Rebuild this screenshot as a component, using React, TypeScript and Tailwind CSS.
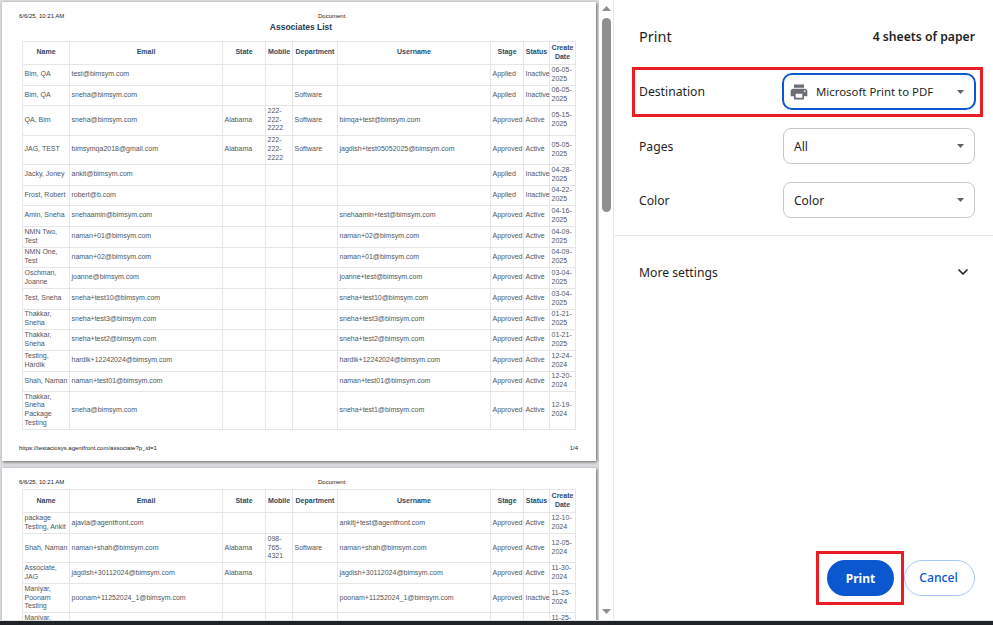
import { ChevronDown } from "lucide-react";
import { MdPrint } from "react-icons/md";

type Row = { h: number; c: string[] };

const widths = [47, 153, 43, 27, 45, 153, 33, 26, 26];
const heads = ["Name", "Email", "State", "Mobile", "Department", "Username", "Stage", "Status", "Create Date"];
const ap = ["Approved", "Active"];
const ai = ["Applied", "Inactive"];

const page1: Row[] = [
  { h: 21, c: ["Bim, QA", "test@bimsym.com", "", "", "", "", ...ai, "06-05-2025"] },
  { h: 20, c: ["Bim, QA", "sneha@bimsym.com", "", "", "Software", "", ...ai, "06-05-2025"] },
  { h: 30, c: ["QA, Bim", "sneha@bimsym.com", "Alabama", "222-222-2222", "Software", "bimqa+test@bimsym.com", ...ap, "05-15-2025"] },
  { h: 29, c: ["JAG, TEST", "bimsymqa2018@gmail.com", "Alabama", "222-222-2222", "Software", "jagdish+test05052025@bimsym.com", ...ap, "05-05-2025"] },
  { h: 21, c: ["Jacky, Joney", "ankit@bimsym.com", "", "", "", "", ...ai, "04-28-2025"] },
  { h: 20, c: ["Frost, Robert", "robert@b.com", "", "", "", "", ...ai, "04-22-2025"] },
  { h: 21, c: ["Amin, Sneha", "snehaamin@bimsym.com", "", "", "", "snehaamin+test@bimsym.com", ...ap, "04-16-2025"] },
  { h: 21, c: ["NMN Two, Test", "naman+01@bimsym.com", "", "", "", "naman+02@bimsym.com", ...ap, "04-09-2025"] },
  { h: 20, c: ["NMN One, Test", "naman+02@bimsym.com", "", "", "", "naman+01@bimsym.com", ...ap, "04-09-2025"] },
  { h: 21, c: ["Oschman, Joanne", "joanne@bimsym.com", "", "", "", "joanne+test@bimsym.com", ...ap, "03-04-2025"] },
  { h: 21, c: ["Test, Sneha", "sneha+test10@bimsym.com", "", "", "", "sneha+test10@bimsym.com", ...ap, "03-04-2025"] },
  { h: 20, c: ["Thakkar, Sneha", "sneha+test3@bimsym.com", "", "", "", "sneha+test3@bimsym.com", ...ap, "01-21-2025"] },
  { h: 21, c: ["Thakkar, Sneha", "sneha+test2@bimsym.com", "", "", "", "sneha+test2@bimsym.com", ...ap, "01-21-2025"] },
  { h: 21, c: ["Testing, Hardik", "hardik+12242024@bimsym.com", "", "", "", "hardik+12242024@bimsym.com", ...ap, "12-24-2024"] },
  { h: 20, c: ["Shah, Naman", "naman+test01@bimsym.com", "", "", "", "naman+test01@bimsym.com", ...ap, "12-20-2024"] },
  { h: 38, c: ["Thakkar, Sneha Package Testing", "sneha@bimsym.com", "", "", "", "sneha+test1@bimsym.com", ...ap, "12-19-2024"] },
];

const page2: Row[] = [
  { h: 21, c: ["package Testing, Ankit", "ajavia@agentfront.com", "", "", "", "ankitj+test@agentfront.com", ...ap, "12-10-2024"] },
  { h: 29, c: ["Shah, Naman", "naman+shah@bimsym.com", "Alabama", "098-765-4321", "Software", "naman+shah@bimsym.com", ...ap, "12-05-2024"] },
  { h: 21, c: ["Associate, JAG", "jagdish+30112024@bimsym.com", "Alabama", "", "", "jagdish+30112024@bimsym.com", ...ap, "11-30-2024"] },
  { h: 29, c: ["Maniyar, Poonam Testing", "poonam+11252024_1@bimsym.com", "", "", "", "poonam+11252024_1@bimsym.com", "Approved", "Inactive", "11-25-2024"] },
  { h: 21, c: ["Maniyar, Poonam", "", "", "", "", "", "", "", "11-25-2024"] },
];

function Table({ rows }: { rows: Row[] }) {
  return (
    <table className="table-fixed border-collapse w-[553px] ml-[20px] text-[7px] leading-[8.7px] text-[#50555b]">
      <colgroup>
        {widths.map((w, i) => (
          <col key={i} style={{ width: w }} />
        ))}
      </colgroup>
      <thead>
        <tr className="h-[23px]">
          {heads.map((t) => (
            <th key={t} className="border border-[#e6e6e6] px-0 py-0 text-center font-bold text-[#2d4a66] whitespace-normal">
              {t}
            </th>
          ))}
        </tr>
      </thead>
      <tbody>
        {rows.map((r, i) => (
          <tr key={i} style={{ height: r.h }}>
            {r.c.map((t, j) => (
              <td key={j} className="border border-[#e6e6e6] pl-[1.5px] pr-0 py-0 align-middle break-normal">
                {t}
              </td>
            ))}
          </tr>
        ))}
      </tbody>
    </table>
  );
}

function Sheet({ children, className }: { children: React.ReactNode; className: string }) {
  return <div className={"bg-white shrink-0 w-[594px] shadow-[1px_1px_3px_rgba(0,0,0,0.55)] " + className}>{children}</div>;
}

function Header() {
  return (
    <div className="flex text-[6px] leading-[8px] text-[#222] pl-[17px] pt-[10px]">
      <span className="w-[299px]">6/6/25, 10:21 AM</span>
      <span>Document</span>
    </div>
  );
}

function Caret() {
  return (
    <svg width="7" height="4" viewBox="0 0 7 4" className="shrink-0">
      <path d="M0 0h7L3.5 4z" fill="#5f6368" />
    </svg>
  );
}

function Select({ label }: { label: string }) {
  return (
    <div className="flex items-center justify-between w-[192px] h-[36px] rounded-[8px] border border-[#c7c7c7] pl-[10px] pr-[10px] text-[12px] text-[#1f1f1f]">
      <span className="pt-[1px]">{label}</span>
      <Caret />
    </div>
  );
}

function Field({ label, children, className }: { label: string; children: React.ReactNode; className: string }) {
  return (
    <div className={"flex items-center justify-between " + className}>
      <span className="pt-[2px]">{label}</span>
      {children}
    </div>
  );
}

export default function App() {
  return (
    <div className="w-[993px] h-[625px] flex flex-col overflow-hidden bg-white text-[#1f1f1f] font-['Noto_Sans','Open_Sans',sans-serif] text-[12.2px]">
      <div className="flex flex-1 min-h-0">
        <div className="w-[599px] bg-[#dcdde0] overflow-hidden font-['Liberation_Sans',Arial,sans-serif] pl-[2px] pt-[2px] flex flex-col gap-[7px]">
          <Sheet className="h-[459px]">
            <Header />
            <div className="text-center font-bold text-[8.5px] leading-[10px] text-[#26384d] pl-[4px] pt-[2px] pb-[8.5px]">Associates List</div>
            <Table rows={page1} />
            <div className="flex justify-between text-[6px] leading-[8px] text-[#222] pl-[17px] pr-[18px] pt-[14px]">
              <span>https://testaciosys.agentfront.com/associate?p_id=1</span>
              <span>1/4</span>
            </div>
          </Sheet>
          <Sheet className="h-[200px]">
            <Header />
            <div className="pt-[3px]">
              <Table rows={page2} />
            </div>
          </Sheet>
        </div>
        <div className="w-[15px] bg-white flex flex-col items-center pt-[6px] pb-[6px] border-r border-[#e8e8e8]">
          <svg width="9" height="5" viewBox="0 0 9 5">
            <path d="M4.5 0L9 5H0z" fill="#8f8f8f" />
          </svg>
          <div className="w-[9px] h-[194px] mt-[7px] rounded-full bg-[#8f8f8f]" />
          <div className="flex-1" />
          <svg width="9" height="5" viewBox="0 0 9 5">
            <path d="M0 0h9L4.5 5z" fill="#8f8f8f" />
          </svg>
        </div>
        <div className="relative flex-1 flex flex-col">
          <div className="flex items-center justify-between pl-[25px] pr-[18px] h-[73px] pt-[1px]">
            <span className="text-[14.5px]">Print</span>
            <span className="font-semibold text-[12.2px]">4 sheets of paper</span>
          </div>
          <div className="flex flex-col pl-[25px] pr-[17px] border-b border-[#e8e8e8] h-[163px]">
            <Field label="Destination" className="h-[37px]">
              <div className="flex items-center w-[194px] h-[37px] rounded-[10px] border-2 border-[#0b57d0] pl-[5px] pr-[10px] text-[11.4px]">
                <MdPrint className="w-[20px] h-[20px] text-[#6b6f73] shrink-0" />
                <span className="ml-[7px] flex-1 pt-[1px]">Microsoft Print to PDF</span>
                <Caret />
              </div>
            </Field>
            <Field label="Pages" className="h-[36px] mt-[18px] pr-[1px]">
              <Select label="All" />
            </Field>
            <Field label="Color" className="h-[36px] mt-[18px] pr-[1px]">
              <Select label="Color" />
            </Field>
          </div>
          <div className="flex items-center justify-between pl-[25px] pr-[22px] h-[72px]">
            <span className="pt-[2px]">More settings</span>
            <ChevronDown className="w-[16px] h-[16px] text-[#1f1f1f]" strokeWidth={2.5} />
          </div>
          <div className="flex-1" />
          <div className="flex justify-end gap-[10px] pr-[18px] pb-[24px]">
            <button className="w-[67px] h-[36px] pt-[1px] rounded-full bg-[#0b57d0] text-white font-bold text-[12px]">Print</button>
            <button className="w-[71px] h-[36px] pt-[1px] pr-[2px] rounded-full bg-white border border-[#a8c7fa] text-[#0b57d0] font-medium text-[12.2px]">Cancel</button>
          </div>
          <div className="absolute left-[18px] top-[67px] w-[351px] h-[50px] border-[3px] border-[#ed1c24] pointer-events-none" />
          <div className="absolute left-[202px] top-[551px] w-[88px] h-[54px] border-[3px] border-[#ed1c24] pointer-events-none" />
        </div>
      </div>
      <div className="h-[5px] border-t border-[#e0e0e0] bg-[#202428] shrink-0" />
    </div>
  );
}
